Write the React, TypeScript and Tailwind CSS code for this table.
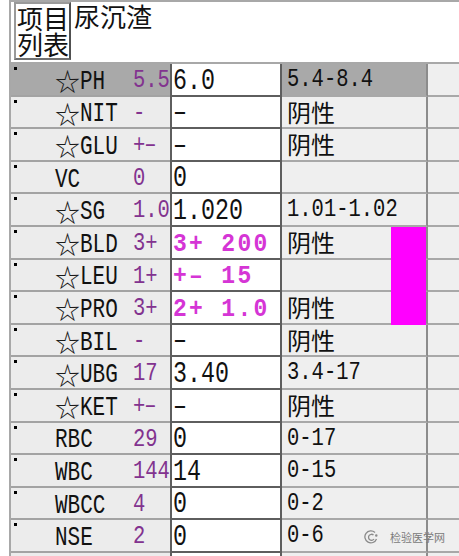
import React from "react";

type Row = {
  star: boolean;
  name: string;
  val: string;
  res: string;
  bold?: boolean;
  ref: string;
  hl?: boolean;
  mag?: boolean;
};

const rows: Row[] = [
  { star: true, name: "PH", val: "5.5", res: "6.0", ref: "5.4-8.4", hl: true },
  { star: true, name: "NIT", val: "-", res: "–", ref: "阴性" },
  { star: true, name: "GLU", val: "+-", res: "–", ref: "阴性" },
  { star: false, name: "VC", val: "0", res: "0", ref: "" },
  { star: true, name: "SG", val: "1.0", res: "1.020", ref: "1.01-1.02" },
  { star: true, name: "BLD", val: "3+", res: "3+ 200", bold: true, ref: "阴性", mag: true },
  { star: true, name: "LEU", val: "1+", res: "+- 15", bold: true, ref: "", mag: true },
  { star: true, name: "PRO", val: "3+", res: "2+ 1.0", bold: true, ref: "阴性", mag: true },
  { star: true, name: "BIL", val: "-", res: "–", ref: "阴性" },
  { star: true, name: "UBG", val: "17", res: "3.40", ref: "3.4-17" },
  { star: true, name: "KET", val: "+-", res: "–", ref: "阴性" },
  { star: false, name: "RBC", val: "29", res: "0", ref: "0-17" },
  { star: false, name: "WBC", val: "144", res: "14", ref: "0-15" },
  { star: false, name: "WBCC", val: "4", res: "0", ref: "0-2" },
  { star: false, name: "NSE", val: "2", res: "0", ref: "0-6" },
  { star: false, name: "", val: "", res: "", ref: "" },
];

function Lat({ children, cls = "" }: { children: React.ReactNode; cls?: string }) {
  return (
    <span
      className={`inline-block origin-center whitespace-pre font-['Liberation_Mono',monospace] leading-none ${cls}`}
    >
      {children}
    </span>
  );
}

function RowView({ r }: { r: Row }) {
  const isCjk = /[\u4e00-\u9fff]/.test(r.ref);
  return (
    <div className="flex h-[32.6px] shrink-0">
      <div
        className={`relative flex w-[159px] items-center border-b-2 border-[#a3a3a3] ${
          r.hl ? "bg-[#a9a9a9]" : "bg-[#ececec]"
        }`}
      >
        <div className="absolute left-[3px] top-[3px] h-[3px] w-[3px] bg-black" />
        <div className="flex w-[122px] items-center pl-[44px] text-[21px] text-[#111]">
          {r.star && (
            <span className="mt-[3px] font-['Noto_Sans_CJK_SC',sans-serif] text-[25px] leading-none text-[#1a1a1a]">
              ☆
            </span>
          )}
          {r.name && <Lat cls="translate-y-[2px] scale-y-[1.3]">{r.name}</Lat>}
        </div>
        <div className="flex w-[37px] items-center overflow-hidden whitespace-nowrap text-[20.5px] text-[#82338f]">
          {r.val === "+-" ? (
            <Lat cls="translate-y-[2px] scale-y-[1.3] tracking-[-1px]">+–</Lat>
          ) : (
            r.val && <Lat cls="translate-y-[2px] scale-y-[1.3]">{r.val}</Lat>
          )}
        </div>
      </div>
      <div className="flex w-[112px] items-center overflow-hidden whitespace-nowrap border-x-2 border-b-2 border-[#5e5e5e] bg-white pl-[1px]">
        {r.res &&
          (r.bold ? (
            <Lat cls="translate-y-[2px] scale-y-[1.15] text-[23px] font-bold tracking-[2.3px] text-[#d535d5]">
              {r.res === "+- 15" ? "+– 15" : r.res}
            </Lat>
          ) : (
            <Lat cls="translate-y-[2px] scale-y-[1.3] text-[23.3px] text-[#111]">{r.res}</Lat>
          ))}
      </div>
      <div
        className={`flex w-[146px] items-center border-b-2 border-r-2 border-[#a8a8a8] border-r-[#8c8c8c] pl-[5px] ${
          r.hl ? "bg-[#a9a9a9]" : "bg-[#efefef]"
        }`}
      >
        {r.ref &&
          (isCjk ? (
            <span className="font-['Noto_Sans_CJK_SC',sans-serif] text-[24px] leading-none text-[#111]">
              {r.ref}
            </span>
          ) : (
            <Lat cls="translate-y-[1px] scale-y-[1.3] text-[20.5px] text-[#111]">{r.ref}</Lat>
          ))}
        {r.mag && <div className="mb-[-2px] ml-auto h-[calc(100%+2px)] w-[35px] self-start bg-[#ff00ff]" />}
      </div>
      <div className="flex-1 border-b-2 border-[#a8a8a8] bg-[#efefef]" />
    </div>
  );
}

export default function App() {
  return (
    <div className="relative h-[556px] w-[459px] overflow-hidden bg-white">
      <div className="ml-[9px] flex h-full flex-col border-l-2 border-[#a8a8a8]">
        <div className="flex h-[64px] shrink-0 items-start border-b-2 border-t-2 border-[#a8a8a8] bg-white">
          <div className="ml-[3px] flex h-[58px] w-[57px] flex-col justify-center border-2 border-[#9a9a9a] border-b-[#707070] border-r-[#505050] font-['Noto_Sans_CJK_SC',sans-serif] text-[26px] leading-[26px] text-[#111]">
            <span className="pl-[1px]">项目</span>
            <span className="pl-[1px]">列表</span>
          </div>
          <div className="ml-[3px] pt-[1px] font-['Noto_Sans_CJK_SC',sans-serif] text-[26px] leading-[26px] text-[#111]">
            尿沉渣
          </div>
        </div>
        {rows.map((r, i) => (
          <RowView key={i} r={r} />
        ))}
      </div>
      <div className="absolute left-[364px] top-[530px] flex items-center gap-[11px]">
        <svg width="15" height="14" viewBox="0 0 15 14" fill="none" stroke="#8a8a8a" strokeWidth="1.3">
          <path d="M11 2.5 A6 6 0 1 0 12.5 9" />
          <path d="M9.5 5 A3 3 0 1 0 10 9" />
          <circle cx="12.3" cy="5.5" r="0.6" fill="#8a8a8a" />
        </svg>
        <span className="font-['Noto_Sans_CJK_SC',sans-serif] text-[11px] leading-none text-[#7a7a7a]">
          检验医学网
        </span>
      </div>
    </div>
  );
}
